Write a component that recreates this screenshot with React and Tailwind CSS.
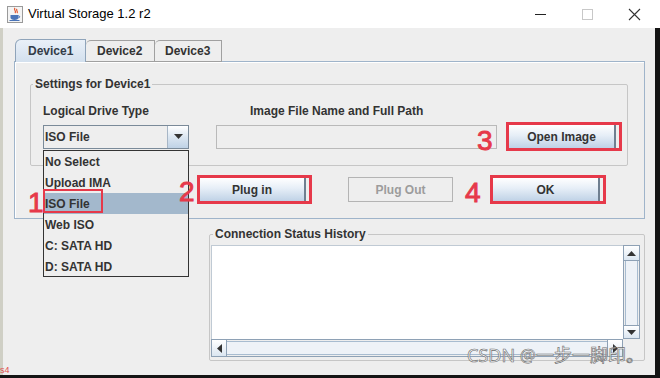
import React from 'react';

const red = 'border-[#e6394a]';

function JavaIcon() {
  return (
    <svg width="16" height="17" viewBox="0 0 16 17">
      <rect x="0.5" y="0.5" width="15" height="16" fill="#f4f4f4" stroke="#9a9a9a" />
      <path d="M8 2c-2 2 2 3 0 5M10 3c-1.5 1.5 1.5 2.5 0 4" stroke="#e0522a" strokeWidth="1.2" fill="none" />
      <path d="M3.5 9h8v2.5c0 1.5-1.5 2.5-4 2.5s-4-1-4-2.5z" fill="#4a74b8" />
      <path d="M11.5 9.8c1.6 0 1.6 2 0 2" stroke="#4a74b8" strokeWidth="1" fill="none" />
      <path d="M2.5 14.5h10" stroke="#4a74b8" strokeWidth="1" />
    </svg>
  );
}

function TitleBar() {
  return (
    <div className="h-[28px] w-full bg-white flex items-center pl-[7px] shrink-0">
      <JavaIcon />
      <span className="ml-[5px] text-[13px] text-black">Virtual Storage 1.2 r2</span>
      <div className="ml-auto flex h-full">
        <div className="w-[47px] flex items-center justify-center">
          <div className="w-[11px] h-px bg-[#222]" />
        </div>
        <div className="w-[47px] flex items-center justify-center">
          <div className="w-[11px] h-[11px] border border-[#c8c8c8]" />
        </div>
        <div className="w-[47px] flex items-center justify-center mr-[2px]">
          <svg width="13" height="13" viewBox="0 0 13 13">
            <path d="M1 1l11 11M12 1L1 12" stroke="#333" strokeWidth="1.1" />
          </svg>
        </div>
      </div>
    </div>
  );
}

function Tabs() {
  return (
    <div className="flex ml-[1px] mt-[12px] h-[22px] items-end relative z-10 -mb-px">
      <div className="w-[71px] h-[23px] border border-b-0 border-[#8fa4ba] rounded-tl-[6px] bg-[linear-gradient(#e9f0f8,#d3e0ee)] pl-[12px] flex items-center font-bold text-[#333c48]">
        Device1
      </div>
      <div className="w-[69px] h-[22px] border border-l-0 border-[#a0a0a0] rounded-tl-[5px] bg-[#eeeeee] pl-[11px] flex items-center font-bold text-[#333]">
        Device2
      </div>
      <div className="w-[67px] h-[22px] border border-l-0 border-[#a0a0a0] rounded-tl-[5px] bg-[#eeeeee] pl-[10px] flex items-center font-bold text-[#333]">
        Device3
      </div>
    </div>
  );
}

function OceanButton({ children }) {
  return (
    <div className="flex-1 h-full mr-[3px] border-r-2 border-[#6f7f90] bg-[linear-gradient(#ffffff,#e6eef7_45%,#bfd2e6)] flex items-center justify-center font-bold text-[#333]">
      {children}
    </div>
  );
}

function Panel() {
  return (
    <div className="w-[631px] h-[158px] border border-[#9fb4ca] bg-[#eeeeee] shadow-[inset_1px_1px_0_#ffffff]">
      <fieldset className="mt-[15px] ml-[15px] w-[598px] border border-[#c6c6c6] rounded-[2px] pb-[14px]">
        <legend className="ml-[2px] px-[2px] font-bold text-[#333] leading-[14px]">Settings for Device1</legend>
        <div className="pl-[12px] pt-[12px]">
          <div className="flex leading-[16px] font-bold text-[#333]">
            <div className="w-[146px]">Logical Drive Type</div>
            <div className="w-[281px] ml-[27px] pl-[34px]">Image File Name and Full Path</div>
          </div>
          <div className="flex items-center mt-[3px] h-[29px]">
            <div className="w-[146px] h-[24px] border border-[#7a8a99] flex bg-[#eeeeee]">
              <div className="flex-1 flex items-center pl-[1px] font-bold text-[#333] border-r border-[#a7b6c6]">ISO File</div>
              <div className="w-[20px] bg-[linear-gradient(#ffffff,#dbe6f1_50%,#bfd2e6)] flex items-center justify-center">
                <svg width="9" height="5" viewBox="0 0 9 5">
                  <path d="M0 0h9L4.5 5z" fill="#333" />
                </svg>
              </div>
            </div>
            <div className="w-[281px] h-[24px] ml-[27px] border border-[#b9b9b9] bg-[#eeeeee]" />
            <div className={`w-[116px] h-[29px] ml-[9px] border-[3px] ${red} flex`}>
              <OceanButton>Open Image</OceanButton>
            </div>
          </div>
        </div>
      </fieldset>
      <div className="flex items-center mt-[9px] h-[29px] pl-[182px]">
        <div className={`w-[115px] h-[29px] border-[3px] ${red} flex`}>
          <OceanButton>Plug in</OceanButton>
        </div>
        <div className="w-[105px] h-[25px] ml-[36px] border border-[#b4b4b4] flex items-center justify-center font-bold text-[#9c9c9c]">
          Plug Out
        </div>
        <div className={`w-[116px] h-[29px] ml-[37px] border-[3px] ${red} flex`}>
          <OceanButton>OK</OceanButton>
        </div>
      </div>
    </div>
  );
}

function ArrowButton({ dir }) {
  const paths = {
    up: 'M0 5h9L4.5 0z',
    down: 'M0 0h9L4.5 5z',
    left: 'M5 0v9L0 4.5z',
    right: 'M0 0v9L5 4.5z',
  };
  const size = dir === 'up' || dir === 'down' ? { w: 9, h: 5 } : { w: 5, h: 9 };
  return (
    <svg width={size.w} height={size.h} viewBox={`0 0 ${size.w} ${size.h}`}>
      <path d={paths[dir]} fill="#333" />
    </svg>
  );
}

function History() {
  return (
    <fieldset className="ml-[195px] mt-[8px] w-[436px] border border-[#c6c6c6] rounded-[2px] pb-[3px]">
      <legend className="ml-[3px] px-[2px] font-bold text-[#333] leading-[14px]">Connection Status History</legend>
      <div className="mt-[4px] ml-[1px] grid grid-cols-[412px_17px] grid-rows-[94px_18px]">
        <div className="bg-white border-l border-t border-[#c0cad4]" />
        <div className="flex flex-col border border-[#8ea1b5] bg-[#eeeeee]">
          <div className="h-[15px] border-b border-[#8ea1b5] bg-[linear-gradient(#ffffff,#dbe6f1)] flex items-center justify-center">
            <ArrowButton dir="up" />
          </div>
          <div className="flex-1 mx-[1px] border-x border-[#a8bcd0] bg-[#eef2f7]" />
          <div className="h-[13px] border-t border-[#8ea1b5] bg-[linear-gradient(#ffffff,#dbe6f1)] flex items-center justify-center">
            <ArrowButton dir="down" />
          </div>
        </div>
        <div className="flex border border-[#8ea1b5] bg-[#eeeeee]">
          <div className="w-[15px] border-r border-[#8ea1b5] bg-[linear-gradient(#ffffff,#dbe6f1)] flex items-center justify-center">
            <ArrowButton dir="left" />
          </div>
          <div className="flex-1 my-[1px] border-y border-[#a8bcd0] bg-[#eef2f7]" />
          <div className="w-[15px] border-l border-[#8ea1b5] bg-[linear-gradient(#ffffff,#dbe6f1)] flex items-center justify-center">
            <ArrowButton dir="right" />
          </div>
        </div>
        <div className="bg-[#eeeeee]" />
      </div>
    </fieldset>
  );
}

const items = ['No Select', 'Upload IMA', 'ISO File', 'Web ISO', 'C: SATA HD', 'D: SATA HD'];

function DropList() {
  return (
    <div className="absolute left-[43px] top-[150px] w-[146px] h-[127px] border border-[#333] bg-[#eeeeee] z-20">
      {items.map((it) => (
        <div
          key={it}
          className={`h-[21px] pl-[1px] flex items-center font-bold text-[#333] ${it === 'ISO File' ? 'bg-[#a3b8cc]' : ''}`}
        >
          {it}
        </div>
      ))}
    </div>
  );
}

function Num({ children, className }) {
  return (
    <span className={`absolute z-30 text-[28px] leading-none text-[#e6394a] [-webkit-text-stroke:0.9px_#e6394a] ${className}`}>{children}</span>
  );
}

export default function App() {
  return (
    <div className="relative w-[660px] h-[378px] overflow-hidden bg-[#141414] flex flex-col font-['Liberation_Sans',Arial,sans-serif] text-[12px]">
      <TitleBar />
      <div className="flex">
        <div className="w-[655px] h-[347px] bg-[#eeeeee] border-l-[3px] border-[#cfcfc5] pl-[11px]">
          <Tabs />
          <Panel />
          <History />
        </div>
      </div>

      <DropList />
      <div className={`absolute z-30 left-[43px] top-[189px] w-[60px] h-[24px] border-2 ${red}`} />
      <Num className="left-[28px] top-[189px]">1</Num>
      <Num className="left-[179px] top-[178px]">2</Num>
      <Num className="left-[477px] top-[127px]">3</Num>
      <Num className="left-[465px] top-[179px]">4</Num>

      <span className="absolute z-30 left-[467px] top-[346px] text-[18px] leading-none text-white/70 [-webkit-text-stroke:0.6px_#6a6a6a] font-['Noto_Sans','Noto_Sans_CJK_SC',sans-serif] whitespace-nowrap">
        CSDN @一步一脚印。
      </span>
      <span className="absolute z-30 left-0 top-[366px] text-[9px] leading-none text-[#e05050]">s4</span>
    </div>
  );
}
